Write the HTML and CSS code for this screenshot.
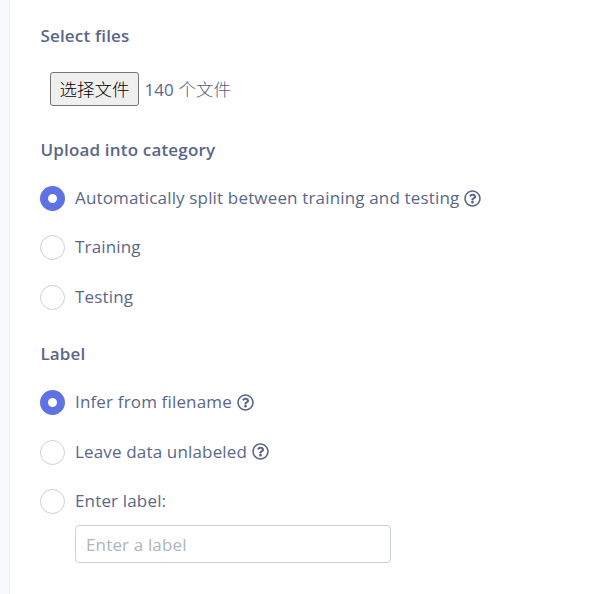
FILE: index.html
```
<!DOCTYPE html>
<html lang="en">
<head>
<meta charset="utf-8">
<title>Upload data</title>
<link rel="stylesheet" href="styles.css">
</head>
<body>
<svg class="defs" aria-hidden="true">
  <symbol id="help" viewBox="0 0 512 512"><path fill="currentColor" d="M256 8C119 8 8 119 8 256s111 248 248 248 248-111 248-248S393 8 256 8zm0 448c-110.500 0-200-89.500-200-200S145.500 56 256 56s200 89.500 200 200-89.500 200-200 200zm107-255.200c0 67.400-72.500 68.400-72.500 93.200V300c0 6.600-5.400 12-12 12h-45.700c-6.600 0-12-5.400-12-12v-8.700c0-35.700 27.100-50 47.600-61.500 17.600-9.800 28.300-16.500 28.300-29.600 0-17.200-22-28.700-39.800-28.700-23.200 0-33.900 11-49 30-4.100 5.100-11.500 6.100-16.700 2.100l-27.900-21.100c-5.100-3.900-6.300-11.100-2.600-16.400C184.800 131.500 214.900 112 261.800 112c49 0 101.200 38.300 101.200 88.800zM298 368c0 23.200-18.800 42-42 42s-42-18.800-42-42 18.800-42 42-42 42 18.800 42 42z"/></symbol>
</svg>
<form class="panel">
  <h2 class="heading">Select files</h2>
  <div class="files"><button type="button" class="choose">选择文件</button><span class="count">140 <span class="unit">个文件</span></span></div>

  <h2 class="heading">Upload into category</h2>
  <div class="options">
    <label class="option"><input type="radio" name="category" checked><span>Automatically split between training and testing</span><svg class="help"><use href="#help"/></svg></label>
    <label class="option"><input type="radio" name="category"><span>Training</span></label>
    <label class="option"><input type="radio" name="category"><span>Testing</span></label>
  </div>

  <h2 class="heading">Label</h2>
  <div class="options">
    <label class="option"><input type="radio" name="label" checked><span>Infer from filename</span><svg class="help"><use href="#help"/></svg></label>
    <label class="option"><input type="radio" name="label"><span>Leave data unlabeled</span><svg class="help"><use href="#help"/></svg></label>
    <label class="option"><input type="radio" name="label"><span>Enter label:</span></label>
  </div>
  <input class="text" type="text" placeholder="Enter a label">
</form>
</body>
</html>
```
FILE: styles.css
```
* { box-sizing: border-box; }
body {
  margin: 0;
  height: 594px;
  padding-left: 9px;
  overflow: hidden;
  background: #f8f9fe;
  color: #5a6788;
  font-family: "Open Sans", "Noto Sans CJK SC", sans-serif;
  font-size: 17px;
  line-height: 25px;
}
.defs { display: none; }
.panel {
  height: 100%;
  padding: 23px 30px 0;
  border-left: 1px solid #eceef4;
  background: #fff;
}
.heading {
  margin: 0;
  padding-left: 0.4px;
  font-size: 17px;
  font-weight: 600;
  line-height: 25px;
  letter-spacing: 0.18px;
}
.files {
  display: flex;
  align-items: center;
  gap: 5.5px;
  height: 34px;
  margin: 24px 0 31px 10px;
}
.unit {
  margin-left: 0.5px;
  color: #525f7f;
  font-family: "Noto Sans CJK SC", sans-serif;
  font-size: 17.5px;
  font-weight: 300;
}
.choose {
  width: 89px;
  height: 34px;
  padding: 0;
  border: 1px solid #767676;
  border-radius: 3px;
  background: #efefef;
  color: #000;
  font: 300 17.5px/30px "Noto Sans CJK SC", sans-serif;
}
.options {
  display: flex;
  flex-direction: column;
  gap: 24.45px;
  margin: 24px 0 31.3px;
}
.option {
  display: flex;
  align-items: center;
  height: 25px;
  letter-spacing: 0.16px;
}
.option span {
  padding-bottom: 2px;
}
.option input {
  appearance: none;
  flex: none;
  width: 25px;
  height: 25px;
  margin: 0 10px 0 0;
  border: 1px solid #cad1d7;
  border-radius: 50%;
  background: #fff;
}
.option input:checked {
  border: 8px solid #5e72e4;
}
.help {
  width: 17px;
  height: 17px;
  margin: 0 0 1px 5px;
}
.text {
  display: block;
  width: 316px;
  height: 38px;
  margin: -20.3px 0 0 35px;
  padding: 1px 10px 0;
  border: 1px solid #cad1d7;
  border-radius: 4px;
  background: #fff;
  font: inherit;
  letter-spacing: 0.15px;
}
.text::placeholder { color: #adb5bd; }
```
